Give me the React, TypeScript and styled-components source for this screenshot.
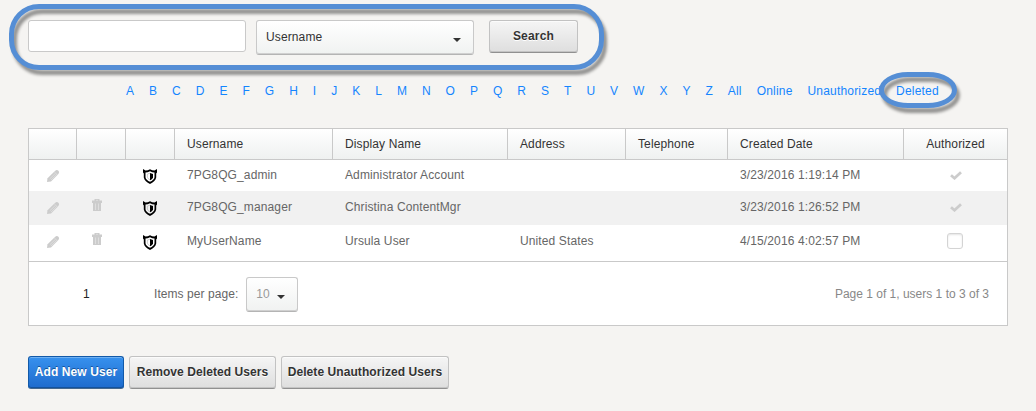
import React from "react";
import styled, { createGlobalStyle, css } from "styled-components";

const GlobalStyle = createGlobalStyle`
  * { box-sizing: border-box; }
  body {
    margin: 0;
    background: #f5f4f2;
    font: 12px/16px "Liberation Sans", Arial, sans-serif;
    letter-spacing: 0.12px;
    color: #666;
  }
  button, input { font: inherit; letter-spacing: inherit; }
`;

const Page = styled.main`
  position: relative;
  width: 1036px;
  height: 411px;
  padding: 20px 28px 0;
  overflow: hidden;
`;

const SearchBar = styled.form`
  display: flex;
  align-items: flex-start;
  height: 35px;
`;

const SearchInput = styled.input`
  width: 218px;
  height: 32px;
  margin-right: 10px;
  border: 1px solid #c9c9c9;
  border-radius: 3px;
  background: #fff;
  outline: none;
`;

const Select = styled.button<{ $width: number; $muted?: boolean }>`
  display: flex;
  align-items: center;
  justify-content: space-between;
  width: ${(p) => p.$width}px;
  height: 35px;
  padding: 0 12px 1px 9px;
  border: 1px solid #c9c9c9;
  border-bottom-color: #b4b4b4;
  border-radius: 3px;
  background: linear-gradient(#fff, #f0f2f1);
  box-shadow: inset 0 -1px 0 #d0d0d0;
  color: ${(p) => (p.$muted ? "#999" : "#333")};
`;

const Caret = styled.i`
  margin-top: 5px;
  border: solid transparent;
  border-width: 4px 4px 0;
  border-top-color: #333;
`;

const Button = styled.button<{ $width: number; $primary?: boolean }>`
  width: ${(p) => p.$width}px;
  height: 33px;
  padding: 0 0 2px;
  border: 1px solid #c2c2c2;
  border-bottom-color: #909090;
  border-radius: 3px;
  background: linear-gradient(#f5f5f5, #dedede);
  box-shadow: inset 0 1px 0 #fbfbfb, inset 0 -1px 0 #c4c4c4;
  color: #333;
  font-weight: bold;
  letter-spacing: 0.08px;
  white-space: nowrap;
  text-shadow: 0 1px 0 #fff;
  ${(p) =>
    p.$primary &&
    css`
      border-color: #1259a8;
      border-bottom-color: #44688f;
      background: linear-gradient(#3791ee, #1e6bcd);
      box-shadow: inset 0 1px 0 #6fb0f2, inset 0 -1px 0 #14529c;
      color: #fff;
      text-shadow: 0 -1px 0 #14529c;
    `}
`;

const SearchButton = styled(Button)`
  margin-left: 15px;
  letter-spacing: 0.18px;
`;

const Filters = styled.nav`
  display: flex;
  gap: 14.9px;
  margin: 28px 0 29px 98px;
`;

const FilterLink = styled.a<{ $word: boolean }>`
  color: #1485ff;
  letter-spacing: ${(p) => (p.$word ? 0.2 : 0.12)}px;
  white-space: nowrap;
`;

const Table = styled.section`
  height: 198px;
  border: 1px solid #c9c9c9;
  background: #fff;
`;

const columns = "48px 49px 49px 158px 175px 118px 102px 176px 103px";

const HeaderRow = styled.div`
  display: grid;
  grid-template-columns: ${columns};
  height: 31px;
  border-bottom: 1px solid #c9c9c9;
  background: linear-gradient(#fff, #eff1f0);
`;

const HeaderCell = styled.div<{ $center?: boolean }>`
  padding: 7px 0 0 ${(p) => (p.$center ? 0 : 12)}px;
  border-right: 1px solid #c9c9c9;
  color: #333;
  text-align: ${(p) => (p.$center ? "center" : "left")};
  &:last-child { border-right: 0; }
`;

const Row = styled.div<{ $height: number; $shaded?: boolean }>`
  display: grid;
  grid-template-columns: ${columns};
  height: ${(p) => p.$height}px;
  background: ${(p) => (p.$shaded ? "#f1f1f1" : "#fff")};
`;

const Cell = styled.div<{ $top: number }>`
  padding: ${(p) => p.$top}px 0 0 12px;
  white-space: nowrap;
`;

const IconCell = styled.div<{ $left: number; $top: number }>`
  padding: ${(p) => p.$top}px 0 0 ${(p) => p.$left}px;
  svg { display: block; }
`;

const Checkbox = styled.span`
  display: block;
  width: 16px;
  height: 16px;
  border: 1px solid #d4d4d4;
  border-radius: 3px;
  background: #fff;
  box-shadow: inset 0 1px 2px #e4e4e4;
`;

const Pager = styled.footer`
  display: flex;
  align-items: center;
  height: 64px;
  padding: 0 18px 0 54px;
  border-top: 1px solid #c9c9c9;
`;

const PageNumber = styled.span`
  width: 71px;
  color: #222;
`;

const PageSize = styled.label`
  display: flex;
  align-items: center;
  gap: 8px;
  flex: 1;
  letter-spacing: 0.06px;
  ${Select} { margin: 2px 0 0; }
`;

const Summary = styled.span`
  color: #888;
  letter-spacing: 0;
`;

const Actions = styled.div`
  display: flex;
  gap: 5px;
  margin-top: 30px;
`;

const Highlight = styled.div<{ $x: number; $y: number; $w: number; $h: number; $radius: string }>`
  position: absolute;
  left: ${(p) => p.$x}px;
  top: ${(p) => p.$y}px;
  width: ${(p) => p.$w}px;
  height: ${(p) => p.$h}px;
  border: 5px solid #558ed5;
  border-radius: ${(p) => p.$radius};
  filter: drop-shadow(3.5px 5px 1.8px rgba(0, 0, 0, 0.4));
  pointer-events: none;
`;

const Pencil = () => (
  <svg width="13" height="13" viewBox="0 0 13 13">
    <path d="M0 12 .5 8.2 8 .9Q9.9-.6 11.4.8 12.7 2.3 11.4 4L4 11.4Z" fill="#ccc" />
    <path d="M2.8 8.8 8.4 3.4M4 10 9.6 4.5M7.7 2.2 10.3 4.8" stroke="#e8e8e8" strokeWidth=".6" />
  </svg>
);

const Trash = () => (
  <svg width="10" height="12" viewBox="0 0 10 12">
    <path d="M0 1.5H2.5V0H7.5V1.5H10V4H9V12H1V4H0Z" fill="#ccc" />
    <path d="M4 1.3H6M3.5 4.5V11M6.5 4.5V11" stroke="#e2e2e2" strokeWidth=".8" />
  </svg>
);

const Shield = () => (
  <svg width="14" height="15" viewBox="0 0 14 15">
    <path
      d="M0 0 2.5 1.5 4.8 1.2 7 .2 9.2 1.2 11.5 1.5 14 0V3.6L13.2 4.6V8.5C12.8 11.5 10 13.5 7 15 4 13.5 1.2 11.5.8 8.5V4.6L0 3.6ZM2.5 3.4V8.2C2.8 10.3 4.5 11.6 7 12.7 9.5 11.6 11.2 10.3 11.5 8.2V3.4L9.3 3.2 7 2.2 4.7 3.2Z"
      fill="#000"
      fillRule="evenodd"
    />
    <path d="M7 4 10 5V8.2C9.7 9.7 8.7 10.6 7 11.3Z" fill="#000" />
    <path d="M7 4.2 4.4 5.1V8.2Q4.8 9.8 7 10.8" fill="none" stroke="#aaa" strokeWidth=".6" />
  </svg>
);

const Check = () => (
  <svg width="12" height="9" viewBox="0 0 12 9">
    <path d="M1 4.2 4.5 7.2 11 1.2" fill="none" stroke="#ccc" strokeWidth="2.8" />
  </svg>
);

const filters = [..."ABCDEFGHIJKLMNOPQRSTUVWXYZ", "All", "Online", "Unauthorized", "Deleted"];

const headers = ["", "", "", "Username", "Display Name", "Address", "Telephone", "Created Date", "Authorized"];

const users = [
  { name: "7PG8QG_admin", display: "Administrator Account", address: "", created: "3/23/2016 1:19:14 PM", authorized: true, removable: false, height: 31, textTop: 7, iconTop: 10 },
  { name: "7PG8QG_manager", display: "Christina ContentMgr", address: "", created: "3/23/2016 1:26:52 PM", authorized: true, removable: true, height: 34, textTop: 8, iconTop: 11 },
  { name: "MyUserName", display: "Ursula User", address: "United States", created: "4/15/2016 4:02:57 PM", authorized: false, removable: true, height: 36, textTop: 8, iconTop: 11 },
];

export default function App() {
  return (
    <>
      <GlobalStyle />
      <Page>
        <SearchBar onSubmit={(e) => e.preventDefault()}>
          <SearchInput aria-label="Search users" />
          <Select type="button" $width={218}>
            Username <Caret />
          </Select>
          <SearchButton $width={89}>Search</SearchButton>
        </SearchBar>
        <Filters>
          {filters.map((f) => (
            <FilterLink key={f} $word={f.length > 1}>{f}</FilterLink>
          ))}
        </Filters>
        <Table>
          <HeaderRow>
            {headers.map((h, i) => (
              <HeaderCell key={i} $center={i === 8}>
                {h}
              </HeaderCell>
            ))}
          </HeaderRow>
          {users.map((u, i) => (
            <Row key={u.name} $height={u.height} $shaded={i === 1}>
              <IconCell $left={18} $top={u.iconTop}><Pencil /></IconCell>
              <IconCell $left={15} $top={u.iconTop - 3}>{u.removable && <Trash />}</IconCell>
              <IconCell $left={17} $top={u.iconTop - 1}><Shield /></IconCell>
              <Cell $top={u.textTop}>{u.name}</Cell>
              <Cell $top={u.textTop}>{u.display}</Cell>
              <Cell $top={u.textTop}>{u.address}</Cell>
              <Cell $top={u.textTop} />
              <Cell $top={u.textTop}>{u.created}</Cell>
              {u.authorized ? (
                <IconCell $left={46} $top={u.iconTop + 1}><Check /></IconCell>
              ) : (
                <IconCell $left={43} $top={8}><Checkbox /></IconCell>
              )}
            </Row>
          ))}
          <Pager>
            <PageNumber>1</PageNumber>
            <PageSize>
              Items per page:
              <Select type="button" $width={52} $muted>
                10 <Caret />
              </Select>
            </PageSize>
            <Summary>Page 1 of 1, users 1 to 3 of 3</Summary>
          </Pager>
        </Table>
        <Actions>
          <Button $width={96} $primary>Add New User</Button>
          <Button $width={147}>Remove Deleted Users</Button>
          <Button $width={168}>Delete Unauthorized Users</Button>
        </Actions>
        <Highlight $x={8.5} $y={3.5} $w={595} $h={66} $radius="30px" />
        <Highlight $x={879} $y={71.5} $w={78} $h={36} $radius="29px / 18px" />
      </Page>
    </>
  );
}
